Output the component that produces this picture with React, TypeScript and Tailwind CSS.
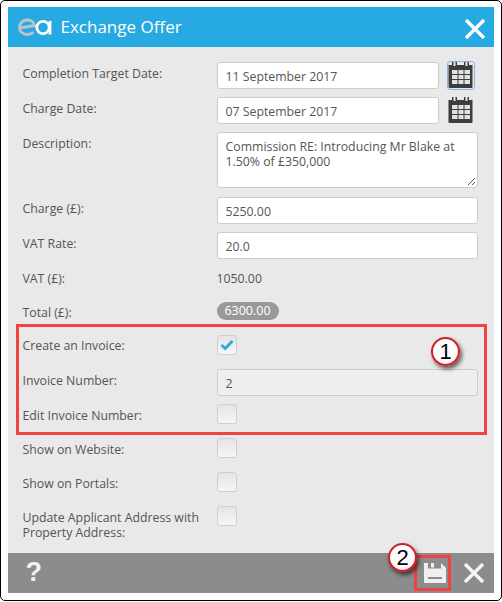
const font = "font-['Open_Sans',sans-serif]";
const labelCls = "w-[194px] pr-4 text-[12.3px] leading-[15px] text-[#555555]";
const inputCls = "flex h-[27px] items-center rounded-[3px] border border-[#cccccc] px-2 pt-[4px] text-[12.3px] text-[#555555]";

function CalendarIcon({ focused }: { focused?: boolean }) {
  return (
    <div className={`ml-[9px] flex h-[27px] w-[26px] items-start justify-center rounded-[2px] ${focused ? "outline-1 outline-[#8fb0e8]" : ""}`}>
      <svg width="25" height="26" viewBox="0 0 24 26">
        <rect x="0" y="2" width="24" height="24" rx="1" fill="#3d3d3d" />
        <rect x="0" y="0" width="24" height="3" fill="#e9e9e9" />
        <rect x="3.500" y="0" width="5" height="6" fill="#3d3d3d" />
        <rect x="15.500" y="0" width="5" height="6" fill="#3d3d3d" />
        <rect x="5" y="0" width="2" height="4" fill="#e9e9e9" />
        <rect x="17" y="0" width="2" height="4" fill="#e9e9e9" />
        <g fill="#e2e2e2">
          <rect x="3.500" y="8" width="5.500" height="4" />
          <rect x="10" y="8" width="5" height="4" />
          <rect x="16" y="8" width="5.500" height="4" />
          <rect x="3.500" y="13" width="5.500" height="4" />
          <rect x="10" y="13" width="5" height="4" />
          <rect x="16" y="13" width="5.500" height="4" />
          <rect x="3.500" y="18" width="5.500" height="4" />
          <rect x="10" y="18" width="5" height="4" />
          <rect x="16" y="18" width="5.500" height="4" />
        </g>
      </svg>
    </div>
  );
}

function Checkbox({ checked }: { checked?: boolean }) {
  return (
    <div className="flex h-[20px] w-[20px] items-center justify-center rounded-[3px] border border-[#cfcfcf] bg-gradient-to-b from-[#e4e4e4] to-[#f6f6f6]">
      {checked && (
        <svg width="14" height="12" viewBox="0 0 14 12">
          <path d="M1.500 6 L5.200 9.500 L12.500 2" fill="none" stroke="#29abe2" strokeWidth="3" />
        </svg>
      )}
    </div>
  );
}

function Row({ label, children, tall, h = "h-[35px]", pt = "pt-[4px]" }: { label: string; children: React.ReactNode; tall?: boolean; h?: string; pt?: string }) {
  return (
    <div className={`flex ${tall ? "h-[65px]" : h}`}>
      <div className={`${labelCls} ${pt}`}>{label}</div>
      {children}
    </div>
  );
}

function Badge({ n, className }: { n: string; className: string }) {
  return (
    <div className={`absolute flex h-[29px] w-[29px] items-center justify-center rounded-full border-2 border-[#d0202a] bg-[radial-gradient(circle_at_45%_40%,#ffffff_60%,#f2b0b0_100%)] font-['Liberation_Sans',sans-serif] text-[22px] font-medium text-black shadow-[2px_3px_4px_rgba(0,0,0,0.6)] ${className}`}>
      {n}
    </div>
  );
}

export default function App() {
  return (
    <div className={`relative h-[602px] w-[502px] overflow-hidden ${font}`}>
      <div className="h-[601px] w-[502px] rounded-[5px] border-[1.5px] border-black bg-white pl-[6.5px] pr-[7.5px] pt-[5.5px]">
        {/* header */}
        <div className="flex h-[40px] items-center bg-[#27aae1] pl-[10px] pr-[9px]">
          <svg width="34" height="18" viewBox="0 0 34 18">
            <path d="M2 10 L16.500 7.500 C16 4 13 2 9.500 2 C5 2 1.500 5 1.500 9.500 C1.500 13.500 5 16.500 9.500 16.500 C12 16.500 14 15.500 15.500 14" fill="none" stroke="#bcc5ca" strokeWidth="2.800" />
            <circle cx="25" cy="9.500" r="6.200" fill="none" stroke="#ffffff" strokeWidth="2.800" />
            <path d="M32 3 V16.500" stroke="#ffffff" strokeWidth="2.800" />
          </svg>
          <span className="ml-[9px] text-[17px] text-white">Exchange Offer</span>
          <svg className="ml-auto mt-[4px]" width="20" height="20" viewBox="0 0 20 20">
            <path d="M1 1 L19 19 M19 1 L1 19" stroke="#ffffff" strokeWidth="3.400" />
          </svg>
        </div>

        {/* form */}
        <div className="h-[506px] bg-[#e9e9e9] pl-[15px] pt-[15px]">
          <Row label="Completion Target Date:">
            <div className={`${inputCls} w-[222px] bg-white`}>11 September 2017</div>
            <CalendarIcon focused />
          </Row>
          <Row label="Charge Date:">
            <div className={`${inputCls} w-[222px] bg-white`}>07 September 2017</div>
            <CalendarIcon />
          </Row>
          <Row label="Description:" tall>
            <div className="relative h-[56px] w-[261px] rounded-[3px] border border-[#cccccc] bg-white px-2 py-[6px] text-[12.3px] leading-[15px] text-[#555555]">
              Commission RE: Introducing Mr Blake at 1.50% of £350,000
              <svg className="absolute bottom-[1px] right-[1px]" width="9" height="9" viewBox="0 0 9 9">
                <path d="M8 1 L1 8 M8 5 L5 8" stroke="#555555" strokeWidth="1" />
              </svg>
            </div>
          </Row>
          <Row label="Charge (£):">
            <div className={`${inputCls} w-[261px] bg-white`}>5250.00</div>
          </Row>
          <Row label="VAT Rate:">
            <div className={`${inputCls} w-[261px] bg-white`}>20.0</div>
          </Row>
          <Row label="VAT (£):">
            <div className="pt-[4px] text-[12.3px] leading-[15px] text-[#555555]">1050.00</div>
          </Row>
          <Row label="Total (£):" h="h-[33px]" pt="pt-[3px]">
            <div className="h-[18px] w-[62px] rounded-full bg-[#999999] text-center text-[12.5px] leading-[18px] text-white">6300.00</div>
          </Row>
          <Row label="Create an Invoice:" h="h-[34px]" pt="pt-[3px]">
            <Checkbox checked />
          </Row>
          <Row label="Invoice Number:">
            <div className={`${inputCls} w-[261px] bg-[#eeeeee]`}>2</div>
          </Row>
          <Row label="Edit Invoice Number:" h="h-[34px]">
            <Checkbox />
          </Row>
          <Row label="Show on Website:" h="h-[34px]">
            <Checkbox />
          </Row>
          <Row label="Show on Portals:" h="h-[34px]">
            <Checkbox />
          </Row>
          <Row label="Update Applicant Address with Property Address:">
            <Checkbox />
          </Row>
        </div>

        {/* footer */}
        <div className="flex h-[40px] items-center bg-[#8c8c8c] pl-[18px] pr-[10px]">
          <span className="font-['Liberation_Sans',sans-serif] text-[27px] font-bold text-[#f2f2f2]">?</span>
          <svg className="ml-auto" width="22" height="20" viewBox="0 0 22 20">
            <path d="M0 0 H17 L22 5 V20 H0 Z" fill="#efefef" />
            <rect x="4" y="0" width="13" height="5.500" fill="#8c8c8c" />
            <rect x="7" y="0" width="3" height="4.500" fill="#efefef" />
            <rect x="4" y="14" width="14" height="2" fill="#8c8c8c" />
          </svg>
          <svg className="ml-[18px]" width="20" height="20" viewBox="0 0 20 20">
            <path d="M1 1 L19 19 M19 1 L1 19" stroke="#f5f5f5" strokeWidth="3.400" />
          </svg>
        </div>
      </div>

      {/* annotations */}
      <div className="absolute left-[16px] top-[324px] h-[111px] w-[471px] border-[3px] border-[#ee4444]" />
      <Badge n="1" className="left-[431px] top-[337px]" />
      <div className="absolute left-[414px] top-[555px] h-[36px] w-[37px] border-[3px] border-[#ee4444]" />
      <Badge n="2" className="left-[388px] top-[543px]" />
    </div>
  );
}
